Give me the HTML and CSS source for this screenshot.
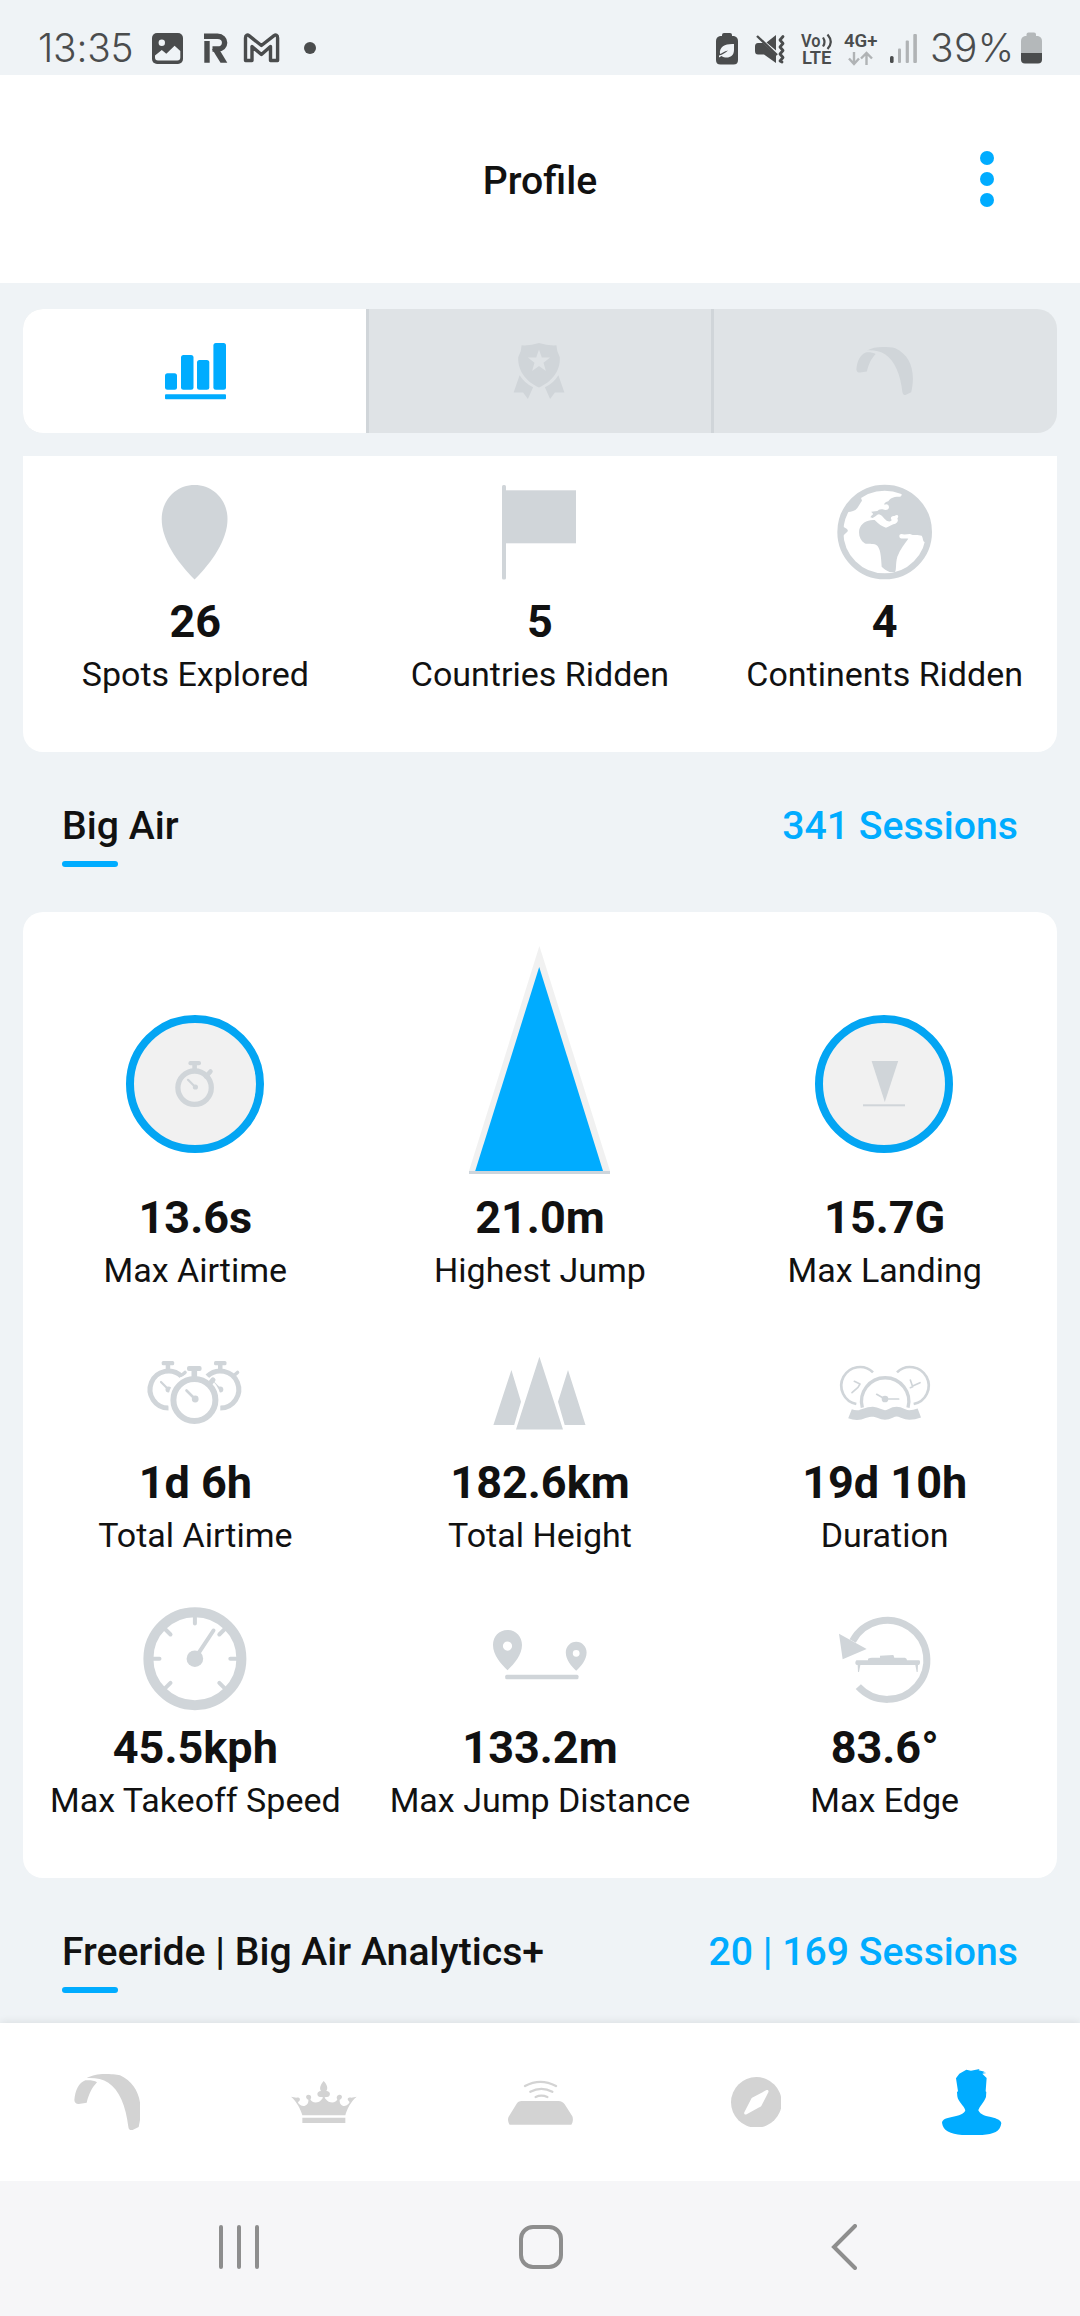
FILE: index.html
```html
<!DOCTYPE html>
<html lang="en">
<head>
<meta charset="utf-8">
<title>Profile</title>
<link rel="stylesheet" href="styles.css">
</head>
<body>
<svg class="defs" width="0" height="0" aria-hidden="true">
  <symbol id="kite" viewBox="42 44 200 169">
    <path d="M111 69C95 86 87 103 80 130L56 134C47 134 43 129 43 122C45 95 56 70 76 63C87 62 103 63 111 69Z"/>
    <path d="M80 56C98 48 112 44 135 44C150 44 170 45 180 48C222 68 242 105 242 155C242 175 239 190 236 203L216 213C209 213 206 209 205 202C198 140 178 92 145 70C127 58 105 55 80 56Z"/>
  </symbol>
</svg>

<div class="statusbar">
  <span class="time">13:35</span>
  <svg class="dark" width="170" height="54" viewBox="150 21 170 54">
    <rect x="152" y="33" width="31" height="31" rx="5"/>
    <circle cx="161.8" cy="42.7" r="3.2" class="bg"/>
    <path class="bg" d="M155 55.500L161.800 50L166.300 53.700L174.600 45.700L180.300 51V57.500Q180.300 60.500 177.300 60.500H158Q155 60.500 155 57.500Z"/>
    <path class="line" stroke-width="5.400" d="M204 36.300H217.500C227 36.300 227 49 217.500 49H212.500M207 41V62.700"/>
    <path d="M212 49H219L227.300 62.700H220.500Z"/>
    <path class="line" stroke-width="3.400" stroke-linejoin="round" d="M245.500 38C245.500 35 247.500 34.500 249 35.700L261.400 45.500L274 35.700C275.800 34.500 277.600 35 277.600 38V60.500H270.500V46.500L261.400 54.500L252 46.500V60.500H245.500Z"/>
    <circle cx="310" cy="48" r="6"/>
  </svg>
  <span class="spacer"></span>
  <svg class="dark" width="218" height="54" viewBox="710 21 218 54">
    <path d="M722 36V35Q722 33 724 33H730Q732 33 732 35V36H734Q738 37 738 41V60Q738 64.500 733.500 64.500H720.500Q716 64.500 716 60V41Q716 37 720 36Z"/>
    <path class="bg" d="M734 44V50C734 58 726 59 721.500 56L719 57.500V55.500C723 54.500 725 53 728 50.500C724 51.500 722.500 53 720 54C719 46 726 43.500 734 44Z"/>
    <path d="M755 46.500Q755 43 758 43H763L776 55V63L764 54.500H758Q755 54.500 755 51Z M766.500 42.500L776 35V50.500Z"/>
    <path class="line" stroke-width="2.400" d="M757 36L777 55"/>
    <path class="line" stroke-width="2.800" stroke-linecap="round" stroke-linejoin="round" d="M783 36.500L780 40L783 43.500L780 47L783 50.500L780 54L783 57.500L780 61L782 62"/>
    <text class="tiny" x="801" y="46.700" textLength="19.500" lengthAdjust="spacingAndGlyphs">Vo</text>
    <path class="line" stroke-width="2.200" d="M823 37.500Q826 42 823 46.500M827.500 34.500Q834 42 827.500 49"/>
    <text class="tiny" x="802" y="64" textLength="29.500" lengthAdjust="spacingAndGlyphs">LTE</text>
    <text class="tiny" x="844" y="47" textLength="33.500" lengthAdjust="spacingAndGlyphs">4G+</text>
    <path class="line faint" stroke-width="2.400" d="M854 52V64M849 58.500L854 64L859 58.500M866.500 65V53M861 58.500L866.500 53L872 58.500"/>
    <rect x="890" y="56" width="3.600" height="7" rx="1.600"/>
    <g class="faintfill"><rect x="898" y="48.500" width="3" height="14.500" rx="1"/><rect x="905.700" y="40.500" width="3.200" height="22.500" rx="1"/><rect x="913.300" y="34" width="3.600" height="29" rx="1"/></g>
  </svg>
  <span class="percent">39%</span>
  <svg class="dark" width="28" height="54" viewBox="1017 21 28 54">
    <path class="cell" d="M1026.500 36V34.500Q1026.500 32.500 1028.500 32.500H1034Q1036 32.500 1036 34.500V36H1038Q1042 37 1042 41V53H1021V41Q1021 37 1025 36Z"/>
    <path d="M1021 53H1042V59.500Q1042 63.500 1038 63.500H1025Q1021 63.500 1021 59.500Z"/>
  </svg>
</div>

<header class="header">
  <h1>Profile</h1>
  <div class="menu"><i></i><i></i><i></i></div>
</header>

<main class="content">
  <div class="tabs">
    <div class="tab active">
      <svg width="61" height="57" viewBox="165 343 61 57">
        <rect x="165" y="373.300" width="12" height="16.500" rx="2.500"/><rect x="181" y="355" width="12.500" height="34.800" rx="2.500"/><rect x="197" y="360" width="12.300" height="29.800" rx="2.500"/><rect x="213.400" y="343" width="12.600" height="46.800" rx="2.500"/><rect x="165" y="394.300" width="61" height="5" rx="1"/>
      </svg>
    </div>
    <div class="tab">
      <svg width="52" height="56" viewBox="513.400 342.700 52 56">
        <path d="M522 345Q531 345.500 539.400 342.700Q548 345.500 556.800 345Q557 351 560.200 357C561 372 551 382 539.400 387.300C528 382 518 372 518.600 357Q522 351 522 345Z"/>
        <path d="M520 375L514 392.300H523.500L528.300 398.700L533.500 387Q525 383 520 375ZM558.800 375L564.800 392.300H555.300L550.500 398.700L545.300 387Q554 383 558.800 375Z"/>
        <path class="star" d="M539.400 349.300L542.200 357.300H550.500L543.900 362.400L546.300 370.700L539.400 365.800L532.500 370.700L534.900 362.400L528.300 357.300H536.600Z"/>
      </svg>
    </div>
    <div class="tab"><svg width="57" height="48"><use href="#kite"/></svg></div>
  </div>

  <section class="card card-open">
    <div class="stat">
      <svg width="120" height="139" viewBox="135 456 120 139"><path d="M194.600 485C213 485 227.500 500 227.500 519C227.500 540 212 562 194.600 579.500C177 562 161.700 540 161.700 519C161.700 500 176 485 194.600 485Z"/></svg>
      <b>26</b><span>Spots Explored</span>
    </div>
    <div class="stat">
      <svg width="120" height="139" viewBox="480 456 120 139"><rect x="502" y="485" width="4" height="94.500" rx="1.500"/><rect x="505" y="490.300" width="71" height="53"/></svg>
      <b>5</b><span>Countries Ridden</span>
    </div>
    <div class="stat">
      <svg width="120" height="139" viewBox="825 456 120 139"><g transform="translate(780 460) scale(.33333)">
        <circle class="ring" cx="314" cy="216" r="133" stroke-width="18"/>
        <path d="M365 104C364 112 356 110 350 110C335 112 328 118 325 124C317 125 312 130 313 134C320 130 327 134 327 142C326 150 318 152 308 148C300 146 295 150 292 153L274 155C272 157 282 160 278 164C272 168 268 174 278 174C285 172 290 164 297 163C306 165 312 177 320 182C328 186 334 184 335 180C330 176 333 168 341 168C345 168 347 164 352 165C357 168 354 172 352 176C356 182 352 188 346 191C338 192 330 198 318 203C306 200 296 192 284 180C262 178 243 190 238 208C235 225 240 240 254 250C262 254 278 251 288 254C302 262 303 290 305 320C315 330 330 340 345 336C350 330 346 310 352 290C360 268 375 250 385 236C375 234 368 238 360 234C356 228 358 222 365 222C372 225 382 222 390 222C400 228 415 224 425 227C430 234 428 245 434 246L446 246L449 216C449 160 415 115 366 93Z"/>
        <path d="M246 122C240 130 236 138 232 144C225 153 214 156 204 156L188 168C196 140 215 115 240 104ZM186 198L200 206C205 210 205 213 198 219L186 230Z"/>
      </g></svg>
      <b>4</b><span>Continents Ridden</span>
    </div>
  </section>

  <div class="section-head"><h2>Big Air</h2><a>341 Sessions</a></div>

  <section class="card">
    <div class="stat">
      <svg width="160" height="279" viewBox="115 912 160 279">
        <circle class="dial" cx="195" cy="1084" r="65"/>
        <circle class="ring" cx="194.600" cy="1087.700" r="16.700" stroke-width="5.300"/>
        <rect x="188.400" y="1061" width="12.600" height="4.300" rx="2"/><rect x="192.300" y="1063" width="4.600" height="8"/>
        <path class="stroke" stroke-width="4.500" d="M206 1076.500L210.500 1071.500"/>
        <path class="stroke" stroke-width="2.200" d="M188 1079.800L195.300 1087"/><circle cx="195.400" cy="1087" r="2.600"/>
      </svg>
      <b>13.6s</b><span>Max Airtime</span>
    </div>
    <div class="stat">
      <svg width="160" height="279" viewBox="460 912 160 279">
        <path class="peak-max" d="M539.400 946L610 1171H469Z"/><path class="peak" d="M539.200 967L603 1171H475.200Z"/><rect class="ground" x="469" y="1171" width="141" height="3"/>
      </svg>
      <b>21.0m</b><span>Highest Jump</span>
    </div>
    <div class="stat">
      <svg width="160" height="279" viewBox="805 912 160 279">
        <circle class="dial" cx="884" cy="1084" r="65"/>
        <path d="M871.600 1061H898.200L884.800 1102Z"/><rect x="863" y="1104.300" width="42" height="2"/>
      </svg>
      <b>15.7G</b><span>Max Landing</span>
    </div>

    <div class="stat">
      <svg width="120" height="166" viewBox="135 1290 120 166">
        <path class="ring" stroke-width="5" d="M181.500 1376.300A18.500 18.500 0 1 0 168.500 1408M207.300 1376.300A18.500 18.500 0 1 1 220.300 1408"/>
        <rect x="161.700" y="1361" width="12.500" height="4.300" rx="1.500"/><rect x="165.700" y="1363" width="4.500" height="8"/>
        <rect x="214" y="1361" width="12.500" height="4.300" rx="1.500"/><rect x="218" y="1363" width="4.500" height="8"/>
        <path class="stroke" stroke-width="3.600" d="M181.500 1375.500L185 1372.500M234 1375.500L237.500 1372.500"/>
        <path class="stroke" stroke-width="2.200" d="M161 1382L168 1389M213 1382L220 1389"/>
        <circle cx="168.500" cy="1389.500" r="3"/><circle cx="220.300" cy="1389.500" r="3"/>
        <circle class="halo" cx="194.400" cy="1400" r="26.500"/>
        <circle class="ring" cx="194.400" cy="1400" r="21" stroke-width="6"/>
        <rect x="187" y="1366" width="14.600" height="5" rx="2"/><rect x="191.500" y="1369" width="5.600" height="8"/>
        <path class="stroke" stroke-width="5" d="M209.500 1384L213 1379.800"/>
        <path class="stroke" stroke-width="2.600" d="M186.500 1390.500L195 1399"/><circle cx="195.200" cy="1399" r="3.400"/>
      </svg>
      <b>1d 6h</b><span>Total Airtime</span>
    </div>
    <div class="stat">
      <svg width="120" height="166" viewBox="480 1290 120 166"><path d="M539.400 1356.700L563 1429.500H516ZM511.400 1370L521 1401.700L514.200 1425H493.400ZM568 1370L585.500 1425H564.700L558 1401.700Z"/></svg>
      <b>182.6km</b><span>Total Height</span>
    </div>
    <div class="stat">
      <svg width="120" height="166" viewBox="825 1290 120 166"><g transform="translate(820 1350) scale(.33333)">
        <path class="ring" stroke-width="8" d="M159 67A56 56 0 1 0 109 162M231 67A56 56 0 1 1 281 162"/>
        <path class="ring" stroke-width="10" d="M127 173A71 71 0 1 1 264 173"/>
        <path class="stroke" stroke-width="5" d="M103 94L120 102L114 112L96 128M271 90L278 110L271 113M278 108L300 98"/>
        <path class="stroke" stroke-width="5" d="M170 133L195 147H236"/><circle cx="195" cy="147" r="10"/>
        <path class="ring" stroke-width="29" d="M90 191C100 195 112 196 122 194C135 190 143 185 158 185C175 186 180 195 195 195C210 195 213 185 230 185C245 185 252 195 268 195C280 195 290 192 298 189"/>
      </g></svg>
      <b>19d 10h</b><span>Duration</span>
    </div>

    <div class="stat">
      <svg width="120" height="166" viewBox="135 1555 120 166">
        <circle class="ring" cx="194.900" cy="1658.700" r="46.500" stroke-width="10"/><circle cx="194.900" cy="1658.700" r="8.300"/>
        <path class="stroke" stroke-width="4" d="M194.900 1616V1623.500M153 1658.700H159.500M230.300 1658.700H237M165 1629L170.500 1634.500M224.800 1629L219.300 1634.500M165 1688.400L170.500 1682.900M224.800 1688.400L219.300 1682.900M194.900 1658.700L213.500 1630.500"/>
      </svg>
      <b>45.5kph</b><span>Max Takeoff Speed</span>
    </div>
    <div class="stat">
      <svg width="120" height="166" viewBox="480 1555 120 166">
        <path fill-rule="evenodd" d="M507.500 1630C516 1630 522 1636.500 522 1645C522 1655 514 1664 507.500 1670.300C501 1664 493 1655 493 1645C493 1636.500 499 1630 507.500 1630ZM507.500 1641.500A4.600 4.600 0 1 0 507.500 1650.700A4.600 4.600 0 1 0 507.500 1641.500ZM576.200 1641.700C582 1641.700 586.600 1646.500 586.600 1652.500C586.600 1660 581 1666 576.200 1670.800C571.400 1666 565.800 1660 565.800 1652.500C565.800 1646.500 570.400 1641.700 576.200 1641.700ZM576.200 1649.900A3.400 3.400 0 1 0 576.200 1656.700A3.400 3.400 0 1 0 576.200 1649.900Z"/>
        <rect x="505.200" y="1674.700" width="73.300" height="4.500" rx="1.500"/>
      </svg>
      <b>133.2m</b><span>Max Jump Distance</span>
    </div>
    <div class="stat">
      <svg width="120" height="166" viewBox="825 1555 120 166"><g transform="translate(820 1350) scale(.33333)">
        <path class="ring" stroke-width="21" d="M115 1010A118.500 118.500 0 1 0 98 873"/>
        <path d="M57 851L140 897L68 928ZM109 931H144V926Q150 923 156 923H180V917L220 915L223 923H255Q261 925 261 931H297Q301 931 300 938Q300 944 296 945H110Q105 944 106 936ZM113 945H121L117 966H114ZM286 945H294L293 966H290Z"/>
      </g></svg>
      <b>83.6°</b><span>Max Edge</span>
    </div>
  </section>

  <div class="section-head"><h2>Freeride | Big Air Analytics+</h2><a>20 | 169 Sessions</a></div>
</main>

<nav class="appnav">
  <div class="first"><svg width="66.700" height="56.300"><use href="#kite"/></svg></div>
  <div><svg width="65.700" height="42" viewBox="692 57 197 126"><path d="M726 167H855V183H726ZM726 160C721 142 710 120 692 104L708 107C716 105 722 110 717 117C712 120 712 122 716 126C728 138 746 130 744 113C735 110 735 98 744 98C754 98 754 108 750 112C753 124 776 126 785 111C790 106 787 105 780 105C768 104 768 87 782 87C777 80 779 70 790 57C802 70 803 80 798 87C812 87 812 104 800 105C793 105 791 106 796 111C806 126 828 124 831 112C826 105 832 98 838 98C847 98 847 110 838 113C836 130 852 138 864 126C868 122 869 120 865 117C858 110 865 105 873 107L889 104C870 120 860 142 855 160Z"/></svg></div>
  <div><svg width="65" height="45" viewBox="1341 57 195 135"><path d="M1382 120H1492C1501 120 1507 124 1511 130L1534 166C1537 174 1536 183 1531 191H1346C1340 183 1340 172 1343 167L1366 130C1370 123 1375 120 1382 120Z"/><path class="wave" d="M1392 75Q1438 50 1485 75M1408 92Q1441 75 1474 92M1424 108Q1441 100 1459 108"/></svg></div>
  <div><svg width="50.700" height="50.700" viewBox="692 65 152 152"><circle cx="768" cy="141" r="76"/><path class="needle" d="M797 105C803 102 806 106 804 111L784 150C783 153 780 155 777 156L739 177C734 179 730 176 732 171L752 132C753 129 756 127 758 126Z"/></svg></div>
  <div class="current"><svg width="59.300" height="66.300" viewBox="1325 40 178 199"><path d="M1398 42L1412 45L1427 42L1438 40L1435 44L1453 48L1447 50L1458 52L1446 54L1459 67L1456 107L1458 109L1457 124C1450 142 1436 155 1434 164C1440 178 1458 182 1480 186C1495 191 1503 195 1503 203C1500 228 1480 236 1446 238C1425 240 1400 240 1385 238C1350 235 1328 225 1325 201C1326 190 1340 187 1358 183C1375 180 1391 176 1395 164C1391 150 1373 138 1371 122L1370 109L1373 107L1367 68L1377 54Z"/></svg></div>
</nav>

<div class="sysnav">
  <svg width="40" height="44" viewBox="219 2225 40 44"><path d="M221 2227V2267M239 2227V2267M257 2227V2267"/></svg>
  <svg width="44" height="44" viewBox="519 2225 44 44"><rect x="521" y="2227" width="40" height="40" rx="12"/></svg>
  <svg width="26" height="46" viewBox="831 2224 26 46"><path d="M855 2226L834 2247L855 2268"/></svg>
</div>
</body>
</html>
```
FILE: styles.css
```css
* { box-sizing: border-box; }

body {
  margin: 0;
  width: 1080px;
  height: 2316px;
  overflow: hidden;
  display: flex;
  flex-direction: column;
  background: #eff3f6;
  color: #111;
  font-family: Roboto, "Liberation Sans", sans-serif;
}

h1, h2 { margin: 0; font-weight: 500; }
svg { display: block; flex: none; }
.defs { position: absolute; }

/* Status bar */
.statusbar {
  flex: none;
  display: flex;
  height: 75px;
  padding: 21px 35px 0 38px;
  font: 350 38.8px/54px Inter, Roboto, sans-serif;
  color: #4a4c4d;
}
.time { width: 112px; letter-spacing: -.2px; white-space: nowrap; }
.spacer { flex: 1; }
.percent { width: 89px; padding-left: 2px; letter-spacing: .4px; white-space: nowrap; }
.dark { fill: #4a4c4d; }
.dark .bg { fill: #eff3f6; }
.dark .line { fill: none; stroke: #4a4c4d; }
.dark .line.faint { stroke: #b0b3b5; }
.dark .faintfill { fill: #b0b3b5; }
.dark .cell { fill: #b4b8ba; }
.tiny { font: 600 18px Roboto, sans-serif; }

/* Title bar */
.header {
  flex: none;
  display: grid;
  grid-template-columns: 1fr auto 1fr;
  align-items: center;
  height: 208px;
  padding: 2px 86px 0;
  background: #fff;
}
.header h1 { grid-column: 2; padding-top: 2px; font-size: 39.2px; line-height: 46px; }
.menu { justify-self: end; display: grid; gap: 7px; padding-bottom: 2px; }
.menu i { width: 14px; height: 14px; border-radius: 50%; background: #00acff; }

/* Scrollable content */
.content { flex: 1; min-height: 0; overflow: hidden; padding: 26px 23px 0; }

.tabs {
  display: grid;
  grid-template-columns: 343px 345px 346px;
  height: 124px;
  margin-bottom: 23px;
  border-radius: 20px;
  overflow: hidden;
  background: #dfe3e6;
  fill: #d0d5d9;
}
.tab { display: grid; place-items: center; }
.tab + .tab { padding-right: 3px; border-left: 3px solid #d0d5d9; }
.tab.active { padding-left: 2px; background: #fff; fill: #00acff; }
.star { fill: #dfe3e6; }

.card {
  display: grid;
  grid-template-columns: repeat(3, 1fr);
  padding-bottom: 58px;
  border-radius: 20px;
  background: #fff;
}
.card-open { border-radius: 0 0 20px 20px; }
.stat { display: flex; flex-direction: column; align-items: center; white-space: nowrap; fill: #d0d5d9; }
.stat b { font-size: 45px; line-height: 53px; }
.stat span { margin-top: 6px; font-size: 34px; line-height: 40px; }

.ring { fill: none; stroke: #d0d5d9; }
.stroke { fill: none; stroke: #d0d5d9; stroke-linecap: round; stroke-linejoin: round; }
.halo { fill: #fff; }
.dial { fill: #f1f1f1; stroke: #03a5f3; stroke-width: 8; }
.peak-max { fill: #f1f1f1; }
.peak { fill: #00acff; }
.ground { fill: #cdd5dc; }

.section-head {
  display: flex;
  justify-content: space-between;
  height: 160px;
  padding: 51px 39px 0;
  font-size: 39.2px;
  line-height: 46px;
  font-weight: 500;
}
.section-head h2 { font-size: inherit; }
.section-head h2::after {
  content: "";
  display: block;
  width: 56px;
  height: 6px;
  margin-top: 12px;
  border-radius: 3px;
  background: #00acff;
}
.section-head a { color: #00acff; }

/* App navigation */
.appnav {
  flex: none;
  position: relative;
  display: grid;
  grid-template-columns: repeat(5, 1fr);
  height: 158px;
  background: #fff;
  box-shadow: 0 -1px 8px rgba(0, 0, 0, .09);
  fill: #d3d3d3;
}
.appnav div { display: grid; place-items: center; }
.appnav .first { padding-right: 2px; }
.appnav .current { fill: #00acff; }
.wave { fill: none; stroke: #d3d3d3; stroke-width: 7; stroke-linecap: round; }
.needle { fill: #fff; }

/* System navigation */
.sysnav {
  flex: none;
  position: relative;
  display: grid;
  grid-template-columns: 300px 312px 26px;
  align-items: center;
  height: 135px;
  padding: 0 0 4px 219px;
  background: #f6f6f8;
  fill: none;
  stroke: #8e8e8e;
  stroke-width: 4;
  stroke-linecap: round;
}
```
